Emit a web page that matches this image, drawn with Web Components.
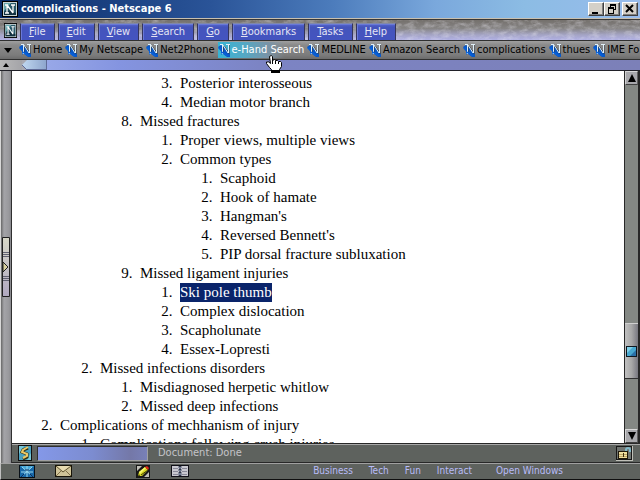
<!DOCTYPE html>
<html lang="en">
<head>
    <meta charset="UTF-8">
    <meta name="viewport" content="width=device-width, initial-scale=1.0">
    <title>complications - Netscape 6</title>
    <style>
        /* list numbers stand two spaces away from their text */
        @counter-style outline {
            system: extends decimal;
            suffix: ".\00a0\00a0";
        }

        html, body {
            height: 100%;
            margin: 0;
            overflow: hidden;
        }

        body {
            font: 11px/16px "DejaVu Sans Condensed", "Noto Sans", sans-serif;
            color: #000;
            background: #fff;
        }

        outline-page ol {
            margin: 0;
            padding: 0 0 0 40px;
            list-style: outline;
        }

        outline-page .above {
            list-style: none;
        }

        outline-page mark {
            display: inline-block;
            color: #fff;
            background: #0a246a;
        }
    </style>
</head>
<body>
    <browser-window>
        <title-bar slot="top">complications - Netscape 6</title-bar>
        <menu-bar slot="top">
            <menu-item><u>F</u>ile</menu-item>
            <menu-item><u>E</u>dit</menu-item>
            <menu-item><u>V</u>iew</menu-item>
            <menu-item><u>S</u>earch</menu-item>
            <menu-item><u>G</u>o</menu-item>
            <menu-item><u>B</u>ookmarks</menu-item>
            <menu-item><u>T</u>asks</menu-item>
            <menu-item><u>H</u>elp</menu-item>
        </menu-bar>
        <link-bar slot="top">
            <link-item>Home</link-item>
            <link-item>My Netscape</link-item>
            <link-item>Net2Phone</link-item>
            <link-item active>e-Hand Search</link-item>
            <link-item>MEDLINE</link-item>
            <link-item>Amazon Search</link-item>
            <link-item>complications</link-item>
            <link-item>thues</link-item>
            <link-item>IME Fo</link-item>
        </link-bar>
        <grip-bar slot="top"></grip-bar>
        <side-handle slot="left"></side-handle>
        <outline-page>
            <ol>
                <li class="above"><ol>
                    <li class="above"><ol>
                        <li class="above"><ol start="3">
                            <li>Posterior interosseous</li>
                            <li>Median motor branch</li>
                        </ol></li>
                        <li value="8">Missed fractures
                            <ol>
                                <li>Proper views, multiple views</li>
                                <li>Common types
                                    <ol>
                                        <li>Scaphoid</li>
                                        <li>Hook of hamate</li>
                                        <li>Hangman's</li>
                                        <li>Reversed Bennett's</li>
                                        <li>PIP dorsal fracture subluxation</li>
                                    </ol>
                                </li>
                            </ol>
                        </li>
                        <li>Missed ligament injuries
                            <ol>
                                <li><mark>Ski pole thumb</mark></li>
                                <li>Complex dislocation</li>
                                <li>Scapholunate</li>
                                <li>Essex-Lopresti</li>
                            </ol>
                        </li>
                    </ol></li>
                    <li>Missed infections disorders
                        <ol>
                            <li>Misdiagnosed herpetic whitlow</li>
                            <li>Missed deep infections</li>
                        </ol>
                    </li>
                </ol></li>
                <li>Complications of mechhanism of injury
                    <ol>
                        <li>Complications following crush injuries</li>
                    </ol>
                </li>
            </ol>
        </outline-page>
        <scroll-bar slot="right"></scroll-bar>
        <status-bar slot="status">Document: Done</status-bar>
        <task-bar slot="bottom">
            <task-link href="#business">Business</task-link>
            <task-link href="#tech">Tech</task-link>
            <task-link href="#fun">Fun</task-link>
            <task-link href="#interact">Interact</task-link>
            <task-link slot="windows" href="#windows">Open Windows</task-link>
        </task-bar>
        <hand-pointer slot="pointer"></hand-pointer>
    </browser-window>

    <script>
        function define(name, html, setup) {
            const template = document.createElement('template');
            template.innerHTML = `<style>
                :host, * { box-sizing: border-box; }
                button { margin: 0; padding: 0; border: 0; font: inherit; color: inherit; background: none; }
                svg { display: block; }
            </style>` + html;
            customElements.define(name, class extends HTMLElement {
                constructor() {
                    super();
                    this.attachShadow({ mode: 'open' }).append(template.content.cloneNode(true));
                }

                connectedCallback() {
                    if (setup) setup(this, this.shadowRoot);
                }
            });
        }

        // square Netscape badge, used by the title bar and the menu bar
        const badge = (w, h) => `
            <svg width="${w}" height="${h}" viewBox="0 0 16 16" preserveAspectRatio="none" aria-hidden="true">
                <rect width="16" height="16" fill="#000"/>
                <rect x="1" y="1" width="14" height="14" fill="#c8d4d4"/>
                <rect x="2" y="2" width="12" height="12" fill="#285868"/>
                <path d="M2 2h7L2 10z" fill="#68a8b0"/>
                <path d="M2 11q6 -3 12 1v2H2z" fill="#123040"/>
                <path d="M3 4h3M5 4v8M3 12h4M5 4l6 8M11 12V4M9 4h4" stroke="#fff" stroke-width="1.3" fill="none"/>
            </svg>`;

        define('browser-window', `
            <style>
                :host { display: flex; flex-direction: column; height: 100vh; position: relative; overflow: hidden; }
                .middle { display: flex; flex: 1; min-height: 0; }
                .column { display: flex; flex-direction: column; flex: 1; min-width: 0; }
                .view { display: flex; flex: 1; min-height: 0; }
            </style>
            <slot name="top"></slot>
            <div class="middle">
                <slot name="left"></slot>
                <div class="column">
                    <div class="view"><slot></slot><slot name="right"></slot></div>
                    <slot name="status"></slot>
                </div>
            </div>
            <slot name="bottom"></slot>
            <slot name="pointer"></slot>
        `);

        define('title-bar', `
            <style>
                :host {
                    display: flex; align-items: center; height: 18px; padding: 0 2px; flex: none;
                    background: linear-gradient(90deg, #0a2c68, #2a5498 33%, #4c7cbc 52%, #7aa8dc 68%, #8cbce4 82%, #98bcec);
                    color: #fff;
                }
                .name { flex: 1; padding-left: 3px; font-size: 11px; font-weight: bold; white-space: nowrap; }
                button {
                    width: 16px; height: 14px; background: #d4d0c8;
                    border: 1px solid; border-color: #fff #404040 #404040 #fff;
                    box-shadow: inset -1px -1px #808080;
                }
                .close { margin-left: 2px; }
            </style>
            ${badge(16, 16)}
            <span class="name"><slot></slot></span>
            <button aria-label="Minimize"><svg width="14" height="12"><path d="M3 9h6v2H3z"/></svg></button>
            <button aria-label="Restore"><svg width="14" height="12"><path d="M5 1h6v2H5zM10 3h1v4H9V6h1zM5 3h1v1H5zM3 4h6v2H3zM3 6h1v4h4V6h1v5H3z"/></svg></button>
            <button class="close" aria-label="Close"><svg width="14" height="12"><path d="M3 2l7 7M10 2L3 9" stroke="#000" stroke-width="2"/></svg></button>
        `);

        define('menu-bar', `
            <style>
                :host {
                    display: grid; height: 23px; flex: none;
                    border-top: 1px solid #c8c0b0; border-bottom: 1px solid #303030;
                    background: linear-gradient(#383838 1px, #74706c 1px, #868484 45%, #a4a4c4 75%, #b0b0e4);
                    overflow: hidden;
                }
                .stone, .row { grid-area: 1 / 1; min-width: 0; }
                .row { display: flex; align-items: flex-end; gap: 3px; padding-left: 4px; }
                .app { align-self: center; margin-top: 2px; }
            </style>
            <svg class="stone" width="100%" height="21" aria-hidden="true">
                <filter id="stone" x="0" y="0" width="100%" height="100%">
                    <feTurbulence type="fractalNoise" baseFrequency="0.12 0.22" numOctaves="5" seed="4"/>
                    <feColorMatrix values="0 0 0 0 0.86  0 0 0 0 0.85  0 0 0 0 0.92  2 0 0 0 -0.8"/>
                </filter>
                <rect y="1" width="100%" height="20" filter="url(#stone)" opacity="0.4"/>
            </svg>
            <div class="row">
                <button class="app" aria-label="Netscape">${badge(13, 15)}</button>
                <slot></slot>
            </div>
        `);

        define('menu-item', `
            <style>
                :host { display: block; }
                button {
                    display: block; height: 17px; padding: 0 8px; line-height: 16px; color: #e4e4f4;
                    background: linear-gradient(#5868d0, #4454bc 3px, #4454c0);
                    border: 1px solid #35355c; border-top-color: #8088a8; border-bottom: 0;
                    box-shadow: inset 1px 1px #6878d8;
                }
            </style>
            <button><slot></slot></button>
        `);

        define('link-bar', `
            <style>
                :host {
                    display: flex; align-items: center; height: 19px; flex: none; overflow: hidden;
                    background: linear-gradient(#a0a0a0, #8a8a8a 4px, #7c7c7c 14px, #6c6c6c);
                    border-bottom: 1px solid #303030;
                }
                .fold { width: 19px; height: 18px; padding: 4px; flex: none; }
            </style>
            <button class="fold" aria-label="Collapse"><svg width="9" height="5"><path d="M0 0h8L4 5z"/></svg></button>
            <slot></slot>
        `);

        define('link-item', `
            <style>
                :host { display: block; flex: none; }
                a { display: flex; align-items: center; gap: 1px; height: 16px; padding-right: 3px; color: #000; text-decoration: none; white-space: nowrap; }
                :host([active]) a { color: #fff; background: linear-gradient(90deg, #38b4d4, #54a8c4 30%, #7894a8 55%, transparent 75%); }
            </style>
            <a href="#">
                <svg width="13" height="13" viewBox="0 0 13 13" aria-hidden="true">
                    <path d="M0 3L3 1L8 5L12 10V13H9L4 9L3 11V7z" fill="#0858c8"/>
                    <path d="M5 1v8M6 2l5 7M11 10V1" stroke="#303840" fill="none"/>
                    <path d="M2 0.500h3M4.500 1v8M5 1l5 8M10.500 9V1M8 0.500h4M3 9.500h3" stroke="#e0f0f8" fill="none"/>
                    <path d="M0 4l3-1v4l4 2l4 3H8l-4-3l-1 2V7z" fill="#0860d8"/>
                </svg>
                <slot></slot>
            </a>
        `);

        define('grip-bar', `
            <style>
                :host {
                    display: flex; height: 11px; flex: none; border-bottom: 1px solid #202028;
                    background: linear-gradient(90deg, #98a8e8 46px, #8494e0 120px, #7c84c4 260px, #7c80b8);
                }
                .fold { display: flex; width: 22px; height: 10px; padding: 3px; background: linear-gradient(90deg, #b8b8b8, #a4a4a8); }
                .more { width: 25px; height: 10px; background: #a8a8b0; }
            </style>
            <button class="fold" aria-label="Expand"><svg width="7" height="4"><path d="M3 0l3 4H0z"/></svg></button>
            <button class="more" aria-label="Scroll toolbar">
                <svg width="25" height="10">
                    <defs><linearGradient id="g"><stop stop-color="#c0d8f0"/><stop offset="1" stop-color="#8ca4cc"/></linearGradient></defs>
                    <path d="M0 5L5 0H25V10H5z" fill="url(#g)"/>
                    <path d="M5 9.500h20M24.500 0v10M0 5l5 5" stroke="#606c98" fill="none"/>
                </svg>
            </button>
        `);

        define('side-handle', `
            <style>
                :host {
                    display: flex; align-items: center; width: 12px; padding-left: 1px; flex: none;
                    background: linear-gradient(90deg, #686868, #a4a4a8 3px, #98989c 8px, #88888c);
                    border-right: 1px solid #303030; border-left: 1px solid #d8d8d8;
                }
            </style>
            <button aria-label="Open sidebar">
                <svg width="9" height="60">
                    <defs><linearGradient id="g" x2="0" y2="1"><stop stop-color="#d8d8c8"/><stop offset="1" stop-color="#b0a8c0"/></linearGradient></defs>
                    <path d="M0.500 0.500h7v59h-7z" fill="url(#g)" stroke="#202020"/>
                    <path d="M1 15.500h6M1 17.500h6M1 19.500h6M1 39.500h6M1 41.500h6M1 43.500h6" stroke="#606070"/>
                    <path d="M1 25l5 5l-5 5z" fill="#d8d0a0" stroke="#202020"/>
                </svg>
            </button>
        `);

        define('outline-page', `
            <style>
                :host {
                    display: block; flex: 1; min-width: 0; overflow: hidden; padding: 3px 8px 0; background: #fff;
                    font: 15px/19px "Liberation Serif", "Times New Roman", serif; white-space: nowrap;
                }
            </style>
            <slot></slot>
        `);

        define('scroll-bar', `
            <style>
                :host { display: flex; flex-direction: column; width: 16px; flex: none; background: #848884; border: 1px solid #282828; border-width: 0 2px 0 1px; }
                button { width: 13px; flex: none; }
                .arrow { display: grid; place-items: center; height: 14px; background: #a8a8ac; border: 1px solid; border-color: #d8d8d8 #606060 #404040 #d0d0d0; }
                .thumb {
                    display: grid; place-items: center; height: 56px;
                    background: linear-gradient(90deg, #c0c0c0, #a8a8a8 50%, #787880);
                    border-top: 1px solid #d0d0d0; border-bottom: 1px solid #303030;
                }
                .before { flex: 239; }
                .after { flex: 50; }
            </style>
            <button class="arrow" aria-label="Scroll up"><svg width="8" height="8"><path d="M4 0l4 8H0z"/></svg></button>
            <div class="before"></div>
            <button class="thumb" aria-label="Scroll position">
                <svg width="11" height="11">
                    <path d="M0 0h11v11H0z" fill="#101820"/>
                    <path d="M1 1h9v9H1z" fill="#48a8d0"/>
                    <path d="M1 1h6L1 7z" fill="#80d0e8"/>
                    <path d="M10 4v6H4z" fill="#2870a8"/>
                </svg>
            </button>
            <div class="after"></div>
            <button class="arrow" aria-label="Scroll down"><svg width="8" height="8"><path d="M0 0h8L4 8z"/></svg></button>
        `);

        define('status-bar', `
            <style>
                :host {
                    display: flex; align-items: center; height: 20px; flex: none; padding: 0 7px 0 6px;
                    background: #5e625e; color: #c4c4c8; border-top: 1px solid #282828; border-bottom: 1px solid #282828;
                    box-shadow: inset 0 1px #a8a8a8; white-space: nowrap;
                }
                .progress {
                    width: 111px; height: 15px; margin: 0 10px 0 5px;
                    background: linear-gradient(90deg, #8498e8, #7c8cd0 50%, #7478a8 85%, #7880b8);
                    border: 1px solid; border-color: #303030 #a0a0a0 #a0a0a0 #303030;
                }
                .text { flex: 1; }
            </style>
            <svg width="14" height="16" aria-hidden="true">
                <path d="M0 0h14v16H0z" fill="#101010"/>
                <path d="M1 1h12v14H1z" fill="#48a0c0"/>
                <path d="M1 1h5L1 9zM9 15h4V8z" fill="#78c8d8"/>
                <path d="M10 3L5 5L4 7L9 9L9 12L5 14" stroke="#302808" stroke-width="3" fill="none"/>
                <path d="M10 2L5 5L4 7L9 9L9 11L5 13" stroke="#e8c868" stroke-width="2" fill="none"/>
            </svg>
            <div class="progress" role="progressbar" aria-label="Loading"></div>
            <span class="text"><slot></slot></span>
            <svg width="17" height="15" aria-hidden="true">
                <path d="M0 0h17v15H0z" fill="#c0c0b8"/>
                <path d="M0 0h16v14H0z" fill="#181818"/>
                <path d="M1 1h14v12H1z" fill="#707470"/>
                <path d="M10 7V4q0-2 2-2t2 2v2" stroke="#80b8c8" stroke-width="2" fill="none"/>
                <path d="M2 5h10v8H2z" fill="#201808"/>
                <path d="M3 6h8v6H3z" fill="#f0e0a0"/>
                <path d="M3 8.500h8M3 10.500h8" stroke="#c0a868"/>
                <path d="M7 7h1v4H7z" fill="#403010"/>
            </svg>
        `);

        define('task-bar', `
            <style>
                :host {
                    display: flex; align-items: center; height: 17px; flex: none; padding: 0 77px 0 18px;
                    background: #5e625e; color: #b8bcf8; border-bottom: 1px solid #101010; border-left: 1px solid #c0c0c0;
                    box-shadow: inset 0 1px #a0a0a0; font-size: 10px; white-space: nowrap;
                }
                .apps { display: flex; align-items: center; flex: 1; }
                .mail { margin-left: 20px; }
                .compose { margin-left: 64px; }
                .book { margin-left: 21px; }
                .links { display: flex; gap: 16px; margin-right: 24px; }
            </style>
            <div class="apps">
                <button aria-label="Navigator">
                    <svg width="16" height="13">
                        <path d="M0 0h16v13H0z" fill="#081018"/>
                        <path d="M1 1h14v11H1z" fill="#1868a8"/>
                        <path d="M1 1h14L8 6z" fill="#48a8d8"/>
                        <path d="M8 1v11M2 7h12M3 2l10 9M13 2L3 11" stroke="#98d8f0"/>
                        <path d="M2 12l3-3M11 9l3 3M6 5h4" stroke="#0c3060"/>
                    </svg>
                </button>
                <button class="mail" aria-label="Mail">
                    <svg width="17" height="12">
                        <path d="M0 0h17v12H0z" fill="#181408"/>
                        <path d="M1 1h15v10H1z" fill="#d0c498"/>
                        <path d="M1 11l5-5M16 11l-5-5" stroke="#807048"/>
                        <path d="M1 1l7 6l8-6" stroke="#605430" fill="none"/>
                        <path d="M2 1h13l-7 5z" fill="#e8dcb0"/>
                    </svg>
                </button>
                <button class="compose" aria-label="Composer">
                    <svg width="14" height="13">
                        <path d="M0 0h14v13H0z" fill="#181818"/>
                        <path d="M1 1h5L1 6zM13 7v5H8z" fill="#c0c0b8"/>
                        <path d="M2 11l1-4l6-5l3 3l-6 6z" fill="#d8d820"/>
                        <path d="M3 7l6-5l1 1l-6 6z" fill="#f8f870"/>
                        <path d="M9 2l2-1l2 2l-1 2z" fill="#e02818"/>
                        <path d="M5 10l7-5M2 11l2-1" stroke="#404008"/>
                    </svg>
                </button>
                <button class="book" aria-label="Address Book">
                    <svg width="18" height="12">
                        <path d="M0 0h18v12H0z" fill="#101018"/>
                        <path d="M1 1h7v10H1zM10 1h7v10h-7z" fill="#c8c8d0"/>
                        <path d="M2 3.500h5M2 6.500h5M2 9.500h5M11 3.500h5M11 6.500h5M11 9.500h5" stroke="#888898"/>
                        <path d="M7 2h4M7 5h4M7 8h4M7 10h4" stroke="#505870"/>
                        <path d="M8 3h2M8 6h2M8 9h2" stroke="#b0c0e0"/>
                    </svg>
                </button>
            </div>
            <nav class="links"><slot></slot></nav>
            <slot name="windows"></slot>
        `);

        define('task-link', `
            <style>
                :host { display: block; }
                a { color: inherit; text-decoration: none; }
            </style>
            <a><slot></slot></a>
        `, (host, root) => {
            root.querySelector('a').href = host.getAttribute('href');
        });

        define('hand-pointer', `
            <style>
                :host { position: absolute; left: 265px; top: 55px; pointer-events: none; }
            </style>
            <svg width="17" height="18" aria-hidden="true">
                <path d="M4.500 1.500q2-2 3 0v4l2-1l1 1l2 0l1 1l2 0l1 1v4l-2 3v2h-8v-2l-2-2l-3-4l0-1.500q2-1 4 1.500z" fill="#fff" stroke="#000"/>
                <path d="M6 15h9v3H6z"/>
                <path d="M7.500 5v4M10.500 6v3M13.500 7v2" stroke="#000"/>
            </svg>
        `);
    </script>
</body>
</html>
